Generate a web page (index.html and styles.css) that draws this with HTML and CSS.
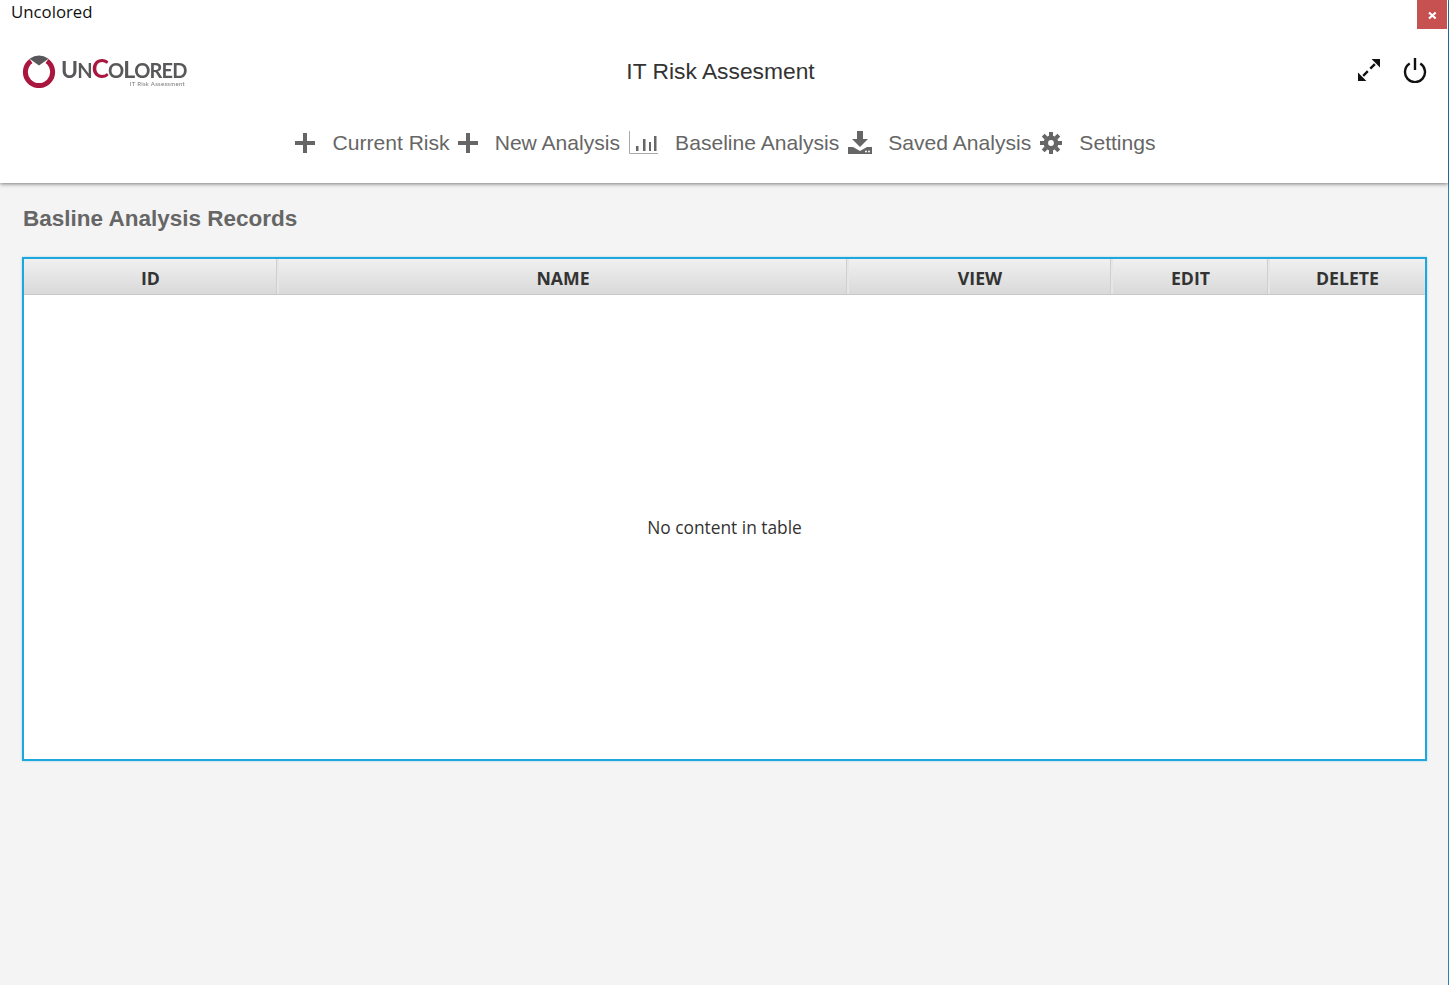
FILE: index.html
```
<!DOCTYPE html>
<html lang="en">
<head>
<meta charset="utf-8">
<title>Uncolored</title>
<link rel="stylesheet" href="styles.css">
</head>
<body>
<div class="window">
  <header class="appbar">
    <div class="titlebar">
      <span class="window-title">Uncolored</span>
      <button class="close" aria-label="Close"><svg width="9" height="9" viewBox="0 0 9 9"><path d="M1 1.5 7.7 7.5M7.7 1.5 1 7.5" stroke="#fff" stroke-width="2.2" fill="none"/></svg></button>
    </div>
    <div class="brandrow">
      <div class="logo">
        <svg class="logo-mark" width="34" height="34" viewBox="0 0 34 34">
          <path d="M9 7A13.6 13.6 0 1 0 25 7" fill="none" stroke="#a9173f" stroke-width="5"/>
          <path d="M7.5 4.8Q17 -2 26.5 4.8L17 11.5Z" fill="#58585a"/>
        </svg>
        <div class="logo-text">
          <div class="logo-name">U<span class="sm">N</span><span class="red">C</span><span class="sm">O</span>L<span class="sm">ORED</span></div>
          <div class="logo-sub">IT Risk Assessment</div>
        </div>
      </div>
      <h1 class="app-title">IT Risk Assesment</h1>
      <div class="actions">
        <svg width="24" height="24" viewBox="0 0 24 24"><g fill="#111"><path d="M1 23V14.6L9.4 23Z"/><path d="M23 1V9.4L14.6 1Z"/></g><path d="M5.5 18.5 18.5 5.5" stroke="#111" stroke-width="2.4" stroke-dasharray="6.5 3.5" stroke-dashoffset="-1"/></svg>
        <svg width="24" height="26" viewBox="0 0 24 26"><path d="M6.7 6.6A10 10 0 1 0 17.3 6.6" fill="none" stroke="#111" stroke-width="2.4"/><path d="M12 1V13" stroke="#111" stroke-width="2.4"/></svg>
      </div>
    </div>
    <nav class="nav">
      <a class="nav-item"><svg class="ic" width="20" height="20" viewBox="0 0 20 20"><path d="M8 0h4v8h8v4h-8v8H8v-8H0V8h8Z" fill="#666"/></svg><span class="gap-a">Current Risk</span></a>
      <a class="nav-item"><svg class="ic" width="20" height="20" viewBox="0 0 20 20"><path d="M8 0h4v8h8v4h-8v8H8v-8H0V8h8Z" fill="#666"/></svg><span class="gap-e">New Analysis</span></a>
      <a class="nav-item"><svg class="ic" width="29" height="24" viewBox="0 0 29 24"><path d="M.5 0V22.5H29" fill="none" stroke="#aaa"/><path d="M7 15h2.5v5H7ZM14 8h2.5v12H14ZM20 11h2v9h-2ZM25 5h2.5v15H25Z" fill="#666"/></svg><span class="gap-b">Baseline Analysis</span></a>
      <a class="nav-item"><svg class="ic" width="24" height="24" viewBox="0 0 24 24"><path d="M9 0h6v8h5l-8 8-8-8h5Z" fill="#666"/><path d="M0 16h5l7 4 7-4h5v7H0Z" fill="#666"/><circle cx="18" cy="20.5" r="1" fill="#fff"/><circle cx="21" cy="20.5" r="1" fill="#fff"/></svg><span class="gap-c">Saved Analysis</span></a>
      <a class="nav-item"><svg class="ic" width="22" height="22" viewBox="0 0 22 22"><path d="M11 3.5a7.5 7.5 0 1 0 0 15 7.5 7.5 0 0 0 0-15Zm0 4.6a2.9 2.9 0 1 1 0 5.8 2.9 2.9 0 0 1 0-5.8Z" fill="#666" fill-rule="evenodd"/><g stroke="#666" stroke-width="4"><path d="M11 0V4M11 18V22M0 11H4M18 11H22M3.2 3.2 6 6M16 16 18.8 18.8M18.8 3.2 16 6M6 16 3.2 18.8"/></g></svg><span class="gap-d">Settings</span></a>
    </nav>
  </header>
  <main class="content">
    <h2 class="heading">Basline Analysis Records</h2>
    <section class="table">
      <div class="thead">
        <div class="th c-id">ID</div>
        <div class="th c-name">NAME</div>
        <div class="th c-view">VIEW</div>
        <div class="th c-edit">EDIT</div>
        <div class="th c-del">DELETE</div>
      </div>
      <div class="tbody">No content in table</div>
    </section>
  </main>
</div>
</body>
</html>
```
FILE: styles.css
```
* { box-sizing: border-box; }
html, body { margin: 0; height: 100%; }
body { background: #f4f4f4; font-family: "Liberation Sans", Arial, sans-serif; overflow: hidden; }
.window { height: 985px; display: flex; flex-direction: column; border-right: 1px solid #2f7fb5; }
.appbar { background: #fff; height: 183px; box-shadow: 0 1px 4px rgba(0,0,0,.5); position: relative; z-index: 1; }
.titlebar { height: 29px; display: flex; justify-content: space-between; align-items: flex-start; }
.window-title { font-family: "Open Sans", sans-serif; font-size: 16.8px; line-height: 23px; color: #111; margin-left: 11px; }
.close { width: 30px; height: 29px; margin-right: 1px; border: 0; padding: 2px 0 0; background: #c75050; display: flex; align-items: center; justify-content: center; }
.brandrow { height: 78px; display: flex; align-items: center; position: relative; padding: 0 21px 0 22px; justify-content: space-between; }
.logo { display: flex; align-items: center; filter: blur(.5px); margin-top: 6px; }
.logo-mark { display: block; margin-right: 5px; }
.logo-text { margin-top: 2px; }
.logo-name { font-family: "Lato", sans-serif; font-weight: 700; font-size: 23px; line-height: 21px; color: #58585a; letter-spacing: -.9px; width: 126px; white-space: nowrap; }
.logo-name .sm { font-size: 20px; }
.logo-name .red { color: #a9173f; font-size: 26px; }
.logo-sub { font-family: "Lato", sans-serif; font-size: 6px; line-height: 6px; color: #777; text-align: right; padding-right: 2px; letter-spacing: .3px; }
.app-title { position: absolute; left: 0; right: 0; margin: 0 7px 0 0; padding-top: 7px; text-align: center; font-weight: 400; font-size: 22.8px; color: #333; pointer-events: none; }
.actions { display: flex; align-items: center; gap: 22px; margin-top: 3px; }
.nav { height: 76px; display: flex; justify-content: center; align-items: flex-start; padding: 22px 0 0 3px; font-size: 21.1px; color: #666; }
.nav-item { display: flex; align-items: center; height: 28px; }
.ic { display: block; flex: none; }
.gap-a { margin-left: 17px; margin-right: 8px; }
.gap-e { margin-left: 17px; margin-right: 9px; }
.gap-b { margin-left: 17px; margin-right: 9px; }
.gap-c { margin-left: 16px; margin-right: 9px; }
.gap-d { margin-left: 17px; }
.content { flex: 1; padding: 0 22px; }
.heading { margin: 23px 0 26px 1px; font-size: 22.5px; line-height: 25px; font-weight: 700; color: #666; }
.table { height: 504px; margin-right: -1px; border: 2px solid #1ea7dc; background: #fff; display: flex; flex-direction: column; box-shadow: 0 0 2px rgba(30,167,220,.4); }
.thead { display: flex; height: 36px; flex: none; border-bottom: 1px solid #c8c8c8; background: linear-gradient(#f0f0f0, #d9d9d9); }
.th { display: flex; align-items: center; justify-content: center; padding-top: 2px; font-family: "Open Sans", sans-serif; font-weight: 700; font-size: 17.7px; color: #333; border-right: 2px solid #e6e6e6; box-shadow: inset -1px 0 #cfcfcf; }
.c-id { width: 255px; }
.c-name { width: 570px; }
.c-view { width: 264px; }
.c-edit { width: 157px; }
.c-del { flex: 1; border-right: 0; box-shadow: none; }
.tbody { flex: 1; display: flex; align-items: center; justify-content: center; font-family: "Open Sans", sans-serif; font-size: 17.35px; color: #333; }
```
